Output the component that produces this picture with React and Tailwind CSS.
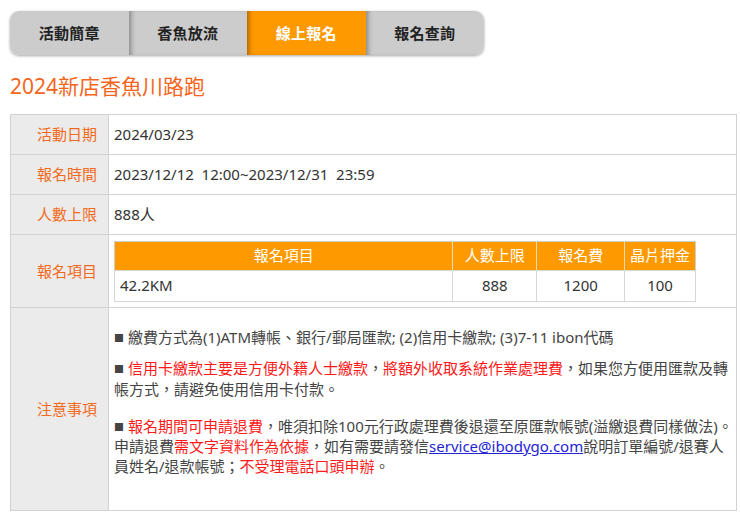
import React from "react";

const font = {
  fontFamily: '"Segoe UI", "Noto Sans", "Noto Sans CJK TC", sans-serif',
};

const tabs = ["活動簡章", "香魚放流", "線上報名", "報名查詢"];

function Tabs() {
  return (
    <div className="flex w-[474px] h-[44px] rounded-[9px] overflow-hidden shadow-[0_1px_3px_rgba(0,0,0,0.35)] ml-[10px]">
      {tabs.map((t, i) => {
        const active = i === 2;
        return (
          <div
            key={t}
            className={
              "flex-1 flex items-center justify-center text-[15px] font-bold tracking-[0.3px] " +
              (active ? "bg-[#ff9900] text-white " : "bg-[#cccccc] text-[#222] ") +
              (i > 0 ? "shadow-[inset_5px_0_5px_-3px_rgba(0,0,0,0.35)]" : "")
            }
          >
            {t}
          </div>
        );
      })}
    </div>
  );
}

function Label({ children }) {
  return (
    <td className="w-[98px] bg-[#ebebeb] text-[#f26a1b] text-right pr-[11px] align-middle border border-[#d2d2d2] text-[15px]">
      {children}
    </td>
  );
}

function Value({ children, className = "" }) {
  return (
    <td className={"bg-white text-[#333] pl-[5px] align-middle border border-[#d2d2d2] text-[15px] " + className}>
      {children}
    </td>
  );
}

const R = ({ children }) => <span className="text-[#ff1a1a]">{children}</span>;
const B = () => <span className="text-[10px] align-[1px] mr-[4px]">■</span>;

export default function App() {
  return (
    <div className="w-[740px] h-[517px] bg-white pt-[11px]" style={font}>
      <Tabs />
      <div className="ml-[10px] mt-[16px] h-[30px] leading-[30px] text-[21px] text-[#f5661c]">
        2024新店香魚川路跑
      </div>
      <table className="ml-[10px] mt-[13px] w-[727px] border-collapse border border-[#d2d2d2]">
        <tbody>
          <tr className="h-[40px]">
            <Label>活動日期</Label>
            <Value>2024/03/23</Value>
          </tr>
          <tr className="h-[40px]">
            <Label>報名時間</Label>
            <Value>
              <span className="whitespace-pre">2023/12/12  12:00~2023/12/31  23:59</span>
            </Value>
          </tr>
          <tr className="h-[40px]">
            <Label>人數上限</Label>
            <Value>888人</Value>
          </tr>
          <tr className="h-[73px]">
            <Label>報名項目</Label>
            <Value>
              <table className="w-[582px] border-collapse border border-[#cfcfcf] text-[15px]">
                <tbody>
                  <tr className="h-[29px] bg-[#ff9900] text-white">
                    <td className="w-[339px] text-center border-r border-[#f0d9b5]">報名項目</td>
                    <td className="w-[84px] text-center border-r border-[#f0d9b5]">人數上限</td>
                    <td className="w-[88px] text-center border-r border-[#f0d9b5]">報名費</td>
                    <td className="w-[71px] text-center">晶片押金</td>
                  </tr>
                  <tr className="h-[31px] text-[#333]">
                    <td className="pl-[5px] border border-[#d6d6d6]">42.2KM</td>
                    <td className="text-center border border-[#d6d6d6]">888</td>
                    <td className="text-center border border-[#d6d6d6]">1200</td>
                    <td className="text-center border border-[#d6d6d6]">100</td>
                  </tr>
                </tbody>
              </table>
            </Value>
          </tr>
          <tr className="h-[203px]">
            <Label>注意事項</Label>
            <Value className="align-top pt-[20px] text-[#444] text-[14.3px]">
              <div className="leading-[19.5px] whitespace-nowrap text-[#444]">
                <p>
                  <B />繳費方式為(1)ATM轉帳、銀行/郵局匯款; (2)信用卡繳款; (3)7-11 ibon代碼
                </p>
                <p className="mt-[10.5px]">
                  <B />
                  <R>信用卡繳款主要是方便外籍人士繳款</R>，<R>將額外收取系統作業處理費</R>，如果您方便用匯款及轉
                  <br />
                  帳方式，請避免使用信用卡付款。
                </p>
                <p className="mt-[17.5px]">
                  <B />
                  <R>報名期間可申請退費</R>，唯須扣除100元行政處理費後退還至原匯款帳號(溢繳退費同樣做法)。
                  <br />
                  申請退費<R>需文字資料作為依據</R>，如有需要請發信
                  <a className="text-[#2323d6] underline" href="#">service@ibodygo.com</a>
                  說明訂單編號/退賽人
                  <br />
                  員姓名/退款帳號；<R>不受理電話口頭申辦</R>。
                </p>
              </div>
            </Value>
          </tr>
        </tbody>
      </table>
    </div>
  );
}
